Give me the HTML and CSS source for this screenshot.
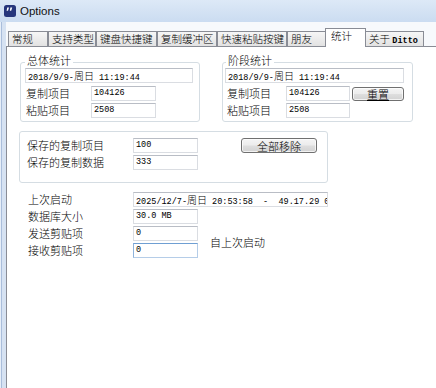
FILE: index.html
```html
<!DOCTYPE html>
<html lang="zh-CN">
<head>
<meta charset="utf-8">
<title>Options</title>
<link rel="stylesheet" href="styles.css">
</head>
<body>
<div class="window">
  <div class="titlebar">
    <svg class="app-icon" width="12" height="12" viewBox="0 0 12 12">
      <rect x="0" y="0" width="12" height="12" rx="2.5" fill="#27367c"/>
      <path d="M3.2 2.6h1.8l-1 3.2H2.6z" fill="#fff"/>
      <path d="M6.4 2.6h1.8l-1 3.2H5.8z" fill="#fff"/>
    </svg>
    <span class="title">Options</span>
  </div>
  <div class="client">
    <div class="tabs">
      <div class="tab t1">常规</div>
      <div class="tab t2">支持类型</div>
      <div class="tab t3">键盘快捷键</div>
      <div class="tab t4">复制缓冲区</div>
      <div class="tab t5">快速粘贴按键</div>
      <div class="tab t6">朋友</div>
      <div class="tab t7 active">统计</div>
      <div class="tab t8">关于 <span class="ditto">Ditto</span></div>
    </div>
    <div class="panel">
      <div class="groups">
        <div class="group g1">
          <div class="legend">总体统计</div>
          <div class="field date">2018/9/9-<span class="cj">周日</span> 11:19:44</div>
          <div class="rows">
            <span class="label">复制项目</span><div class="field">104126</div>
            <span class="label">粘贴项目</span><div class="field">2508</div>
          </div>
        </div>
        <div class="group g2">
          <div class="legend">阶段统计</div>
          <div class="field date">2018/9/9-<span class="cj">周日</span> 11:19:44</div>
          <div class="rows">
            <span class="label">复制项目</span><div class="field">104126</div><button class="btn reset"><u>重置</u></button>
            <span class="label">粘贴项目</span><div class="field">2508</div>
          </div>
        </div>
      </div>
      <div class="group g3">
        <div class="rows">
          <span class="label">保存的复制项目</span><div class="field">100</div><button class="btn remove">全部移除</button>
          <span class="label">保存的复制数据</span><div class="field">333</div>
        </div>
      </div>
      <div class="misc">
        <span class="label">上次启动</span><div class="field wide">2025/12/7-<span class="cj">周日</span> 20:53:58  -  49.17.29 0</div>
        <span class="label">数据库大小</span><div class="field">30.0 MB</div>
        <span class="label">发送剪贴项</span><div class="field">0</div>
        <span class="since">自上次启动</span>
        <span class="label">接收剪贴项</span><div class="field focus">0</div>
      </div>
    </div>
  </div>
</div>
</body>
</html>
```

FILE: styles.css
```css
* { box-sizing: border-box; }
html, body { margin: 0; padding: 0; }
body {
  width: 436px;
  height: 388px;
  overflow: hidden;
  background: #fff;
  font-family: "Noto Sans CJK SC", "Noto Sans", sans-serif;
  font-weight: 300;
  font-size: 11px;
  color: #000;
}
.window {
  width: 436px;
  height: 388px;
  display: flex;
  flex-direction: column;
}
.titlebar {
  height: 22px;
  flex: none;
  display: flex;
  align-items: center;
  padding-left: 4px;
  background: linear-gradient(180deg, #dde9f7 0%, #d2e1f3 60%, #cbdcf1 100%);
}
.app-icon { flex: none; }
.title {
  margin-left: 4px;
  font-family: "Liberation Sans", "Noto Sans", sans-serif;
  font-weight: 400;
  font-size: 11.5px;
  line-height: 14px;
  color: #111;
}
.client {
  flex: 1;
  padding-left: 6px;
  background:
    linear-gradient(90deg, #e6eef8 0 1px, #a9bddb 1px 2px, #d6e2f2 2px 6px, transparent 6px),
    #f7f9fc;
  display: flex;
  flex-direction: column;
}
.tabs {
  margin-top: 6px;
  height: 18px;
  display: flex;
  align-items: flex-end;
  padding-left: 2px;
}
.tab {
  height: 15px;
  border: 1px solid #898c95;
  border-bottom: none;
  background: linear-gradient(180deg, #f6f6f6 0%, #ececec 50%, #e2e2e2 100%);
  padding-left: 3px;
  line-height: 13px;
  font-size: 10.5px;
  white-space: nowrap;
  overflow: hidden;
}
.t1 { width: 40px; }
.t2 { width: 48px; }
.t3 { width: 61px; }
.t4 { width: 60px; }
.t5 { width: 70px; }
.t6 { width: 39px; }
.t7 { width: 41px; }
.t8 { width: 59px; }
.tab.active {
  height: 19px;
  margin: 0 -1px -1px -1px;
  position: relative;
  z-index: 1;
  background: #fff;
  padding-left: 5px;
  line-height: 14px;
}
.ditto {
  font-family: "Liberation Mono", monospace;
  font-weight: bold;
  font-size: 8.5px;
}
.panel {
  flex: 1;
  border-left: 1px solid #898c95;
  border-top: 1px solid #898c95;
  background: #fff;
  margin-right: -20px;
}
.groups {
  display: flex;
  margin-top: 15px;
  margin-left: 13px;
}
.group {
  border: 1px solid #d5dde3;
  border-radius: 3px;
  background: #fff;
}
.legend {
  margin-top: -9px;
  width: max-content;
  background: #fff;
  padding: 0 2px;
  line-height: 13px;
  height: 13px;
}
.g1 { width: 180px; padding: 0 0 3px 4px; }
.g2 { width: 191px; margin-left: 22px; padding: 0 0 3px 2px; }
.g2 .legend { margin-left: 1px; }
.field {
  height: 15px;
  background: #fff;
  border: 1px solid #dadde2;
  border-top-color: #b9bdc5;
  font-family: "Liberation Mono", "Noto Sans CJK SC", monospace;
  font-weight: 400;
  font-size: 8.5px;
  line-height: 13px;
  padding-left: 2px;
  white-space: pre;
  overflow: hidden;
}
.cj { font-family: "Noto Sans CJK SC", sans-serif; font-weight: 300; font-size: 10px; }
.date { margin-top: 1px; }
.g1 .date { width: 168px; }
.g2 .date { width: 179px; }
.rows {
  display: grid;
  align-items: center;
}
.g1 .rows {
  margin-top: 3px;
  grid-template-columns: 66px 65px;
  row-gap: 2px;
}
.g2 .rows {
  margin-top: 3px;
  grid-template-columns: 61px 64px 52px;
  row-gap: 2px;
}
.label { padding-left: 1px; line-height: 15px; white-space: nowrap; }
.g2 .label { padding-left: 2px; }
.btn {
  font-family: "Noto Sans CJK SC", sans-serif;
  font-weight: 300;
  font-size: 11px;
  line-height: 12px;
  color: #000;
  padding: 0;
  border: 1px solid #707070;
  border-radius: 3px;
  background: linear-gradient(180deg, #f4f4f4 0%, #ececec 48%, #dedede 52%, #d2d2d2 100%);
  box-shadow: inset 0 0 0 1px rgba(255,255,255,0.7);
}
.reset { margin-left: 2px; width: 52px; height: 14px; }
.reset u { text-underline-offset: 1px; }
.g3 {
  margin-top: 9px;
  margin-left: 12px;
  width: 309px;
  padding: 6px 0 12px 7px;
}
.g3 .rows {
  grid-template-columns: 106px 65px 76px;
  row-gap: 2px;
}
.g3 .label { padding-left: 0; }
.remove { margin-left: 43px; height: 15px; width: 76px; }
.misc {
  margin-top: 9px;
  padding-left: 21px;
  display: grid;
  grid-template-columns: 105px 65px auto;
  grid-auto-rows: 15px;
  row-gap: 2px;
  align-items: center;
}
.misc .label { padding-left: 0; grid-column: 1; }
.misc .field { grid-column: 2; }
.misc .field.wide { grid-column: 2 / span 2; width: 195px; }
.since {
  grid-column: 3;
  grid-row: 3 / span 2;
  align-self: center;
  margin-left: 12px;
  line-height: 15px;
}
.field.focus {
  border-color: #b5cde8;
  border-top-color: #6f9fd3;
  border-left-color: #8fb3dc;
}
```
